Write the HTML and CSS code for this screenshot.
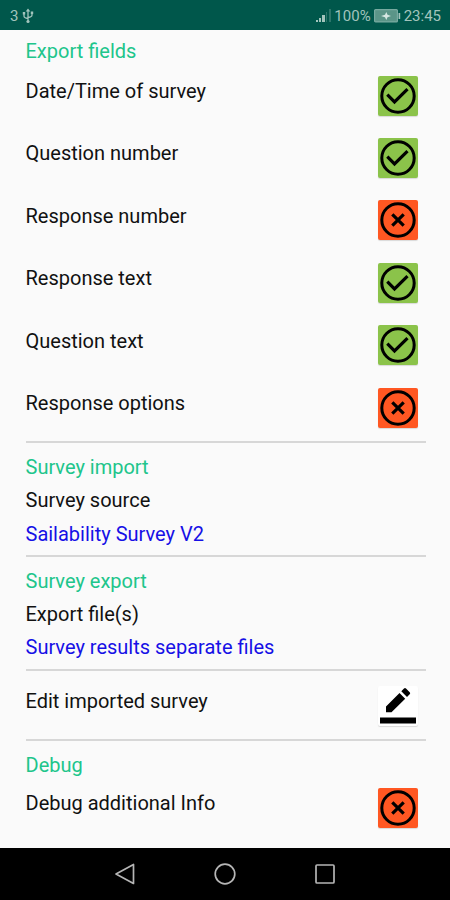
FILE: index.html
```html
<!DOCTYPE html>
<html lang="en">
<head>
<meta charset="utf-8">
<title>Survey settings</title>
<link rel="stylesheet" href="styles.css">
</head>
<body>
<svg class="defs" aria-hidden="true">
  <symbol id="check" viewBox="0 0 40 40"><circle cx="20" cy="20" r="16.2" fill="none" stroke="#000" stroke-width="3"/><path d="M9.300 18.700l7.200 7.200L29.500 13.200" fill="none" stroke="#000" stroke-width="3.200"/></symbol>
  <symbol id="cross" viewBox="0 0 40 40"><circle cx="20" cy="20" r="16.2" fill="none" stroke="#000" stroke-width="3"/><path d="M14.300 14.300l11.400 11.400M25.700 14.300L14.300 25.700" fill="none" stroke="#000" stroke-width="3.200"/></symbol>
</svg>
<header class="status">
  <span class="sim">3</span>
  <svg class="usb" width="12" height="16" viewBox="0 0 12 16"><path d="M6 2v11M2 5v3q0 2 4 2.500M10 4v3q0 2-4 2.500" fill="none" stroke="currentColor" stroke-width="1.300"/><path d="M3.700 3.500L6 .5l2.300 3zM.8 4h2.400v2.400H.8zM8.800 3.500h2.400v2.400H8.800z" fill="currentColor"/><circle cx="6" cy="13.500" r="1.600" fill="currentColor"/></svg>
  <svg class="signal" width="16" height="14" viewBox="0 0 16 14"><path d="M0 11h2v2H0zM3 9h2v4H3zM6 6h3v7H6z" fill="currentColor"/><path d="M10 3h1v10h-1zM13 0h2v13h-2z" fill="currentColor" opacity=".28"/></svg>
  <span class="percent">100%</span>
  <svg class="battery" width="27" height="14" viewBox="0 0 27 14"><rect x=".6" y=".6" width="22.800" height="12.300" rx="1" fill="#5b9588" stroke="#78aaa0" stroke-width="1.200"/><path d="M24.500 4h1.700v6h-1.700z" fill="#a2c4bc"/><path d="M7 7l4-1.300L12.300 3l1.200 2.700L17 7l-3.500 1.200-1.200 2.700L11 8.200z" fill="#d6e7e3"/></svg>
  <span class="clock">23:45</span>
</header>
<main class="settings">
  <section class="fields">
    <h2 class="heading">Export fields</h2>
    <div class="row"><span>Date/Time of survey</span><button class="toggle on" aria-label="On"><svg><use href="#check"/></svg></button></div>
    <div class="row"><span>Question number</span><button class="toggle on" aria-label="On"><svg><use href="#check"/></svg></button></div>
    <div class="row"><span>Response number</span><button class="toggle off" aria-label="Off"><svg><use href="#cross"/></svg></button></div>
    <div class="row"><span>Response text</span><button class="toggle on" aria-label="On"><svg><use href="#check"/></svg></button></div>
    <div class="row"><span>Question text</span><button class="toggle on" aria-label="On"><svg><use href="#check"/></svg></button></div>
    <div class="row"><span>Response options</span><button class="toggle off" aria-label="Off"><svg><use href="#cross"/></svg></button></div>
  </section>
  <section class="divided">
    <h2 class="heading">Survey import</h2>
    <p class="line">Survey source</p>
    <p class="line value">Sailability Survey V2</p>
  </section>
  <section class="divided">
    <h2 class="heading">Survey export</h2>
    <p class="line">Export file(s)</p>
    <p class="line value">Survey results separate files</p>
  </section>
  <section class="divided edit">
    <div class="row"><span>Edit imported survey</span><button class="toggle plain" aria-label="Edit"><svg viewBox="0 0 40 40"><path d="M8 20.500L21.500 7l5.700 5.700L13.500 26.300H8zM23.300 5.200L26 2.500q1-1 2 0l3.700 3.700q1 1 0 2L29 11z"/><path d="M2 31.500h36v6H2z"/></svg></button></div>
  </section>
  <section class="divided debug">
    <h2 class="heading">Debug</h2>
    <div class="row"><span>Debug additional Info</span><button class="toggle off" aria-label="Off"><svg><use href="#cross"/></svg></button></div>
  </section>
</main>
<nav class="nav">
  <svg viewBox="0 0 24 24"><path d="M20.500 2.500v19L3 12z"/></svg>
  <svg viewBox="0 0 24 24"><circle cx="12" cy="12" r="9.800"/></svg>
  <svg viewBox="0 0 24 24"><rect x="3" y="3" width="18" height="18" rx="1"/></svg>
</nav>
</body>
</html>
```
FILE: styles.css
```css
* { box-sizing: border-box; margin: 0; padding: 0; }
body {
  width: 450px;
  height: 900px;
  display: flex;
  flex-direction: column;
  overflow: hidden;
  background: #fafafa;
  color: #111;
  font: 400 20px/33.3px Roboto, sans-serif;
}
.defs { display: none; }
.status {
  flex: 0 0 30px;
  display: flex;
  align-items: center;
  padding: 2px 9px 0 10px;
  background: #00574b;
  color: #a2c4bc;
  font-size: 15px;
  line-height: 28px;
}
.usb { margin-left: 4px; }
.signal { margin-left: auto; margin-right: 2px; }
.battery { margin: 0 3px 0 3px; }
.settings { flex: 1; min-height: 0; padding: 4.8px 24.5px 0 25.5px; }
.fields { height: 406.7px; }
.heading { font-size: 20px; font-weight: 400; color: #20c58b; }
.row {
  height: 62.4px;
  display: flex;
  justify-content: space-between;
  align-items: flex-start;
  padding: 7px 8px 0 0;
}
.toggle {
  width: 40px;
  height: 40px;
  margin-top: 0.6px;
  border: 0;
  border-radius: 2px;
  box-shadow: 0 1px 1px #0002;
}
.toggle svg { display: block; width: 40px; height: 40px; }
.on { background: #8bc34a; }
.off { background: #ff5722; }
.plain { background: #fff; }
.divided { border-top: 2px solid #d7d7d7; padding: 7.5px 0 4.4px; }
.edit { padding-bottom: 0; }
.edit .row { height: 60.5px; padding-top: 6.5px; }
.debug .row { padding-top: 5.5px; }
.value { color: #1610e6; }
.nav {
  flex: 0 0 52.500px;
  display: flex;
  align-items: center;
  justify-content: center;
  gap: 76px;
  background: #000;
}
.nav svg { width: 24px; height: 24px; fill: none; stroke: #b5b5b5; stroke-width: 1.700; stroke-linejoin: round; }
```
